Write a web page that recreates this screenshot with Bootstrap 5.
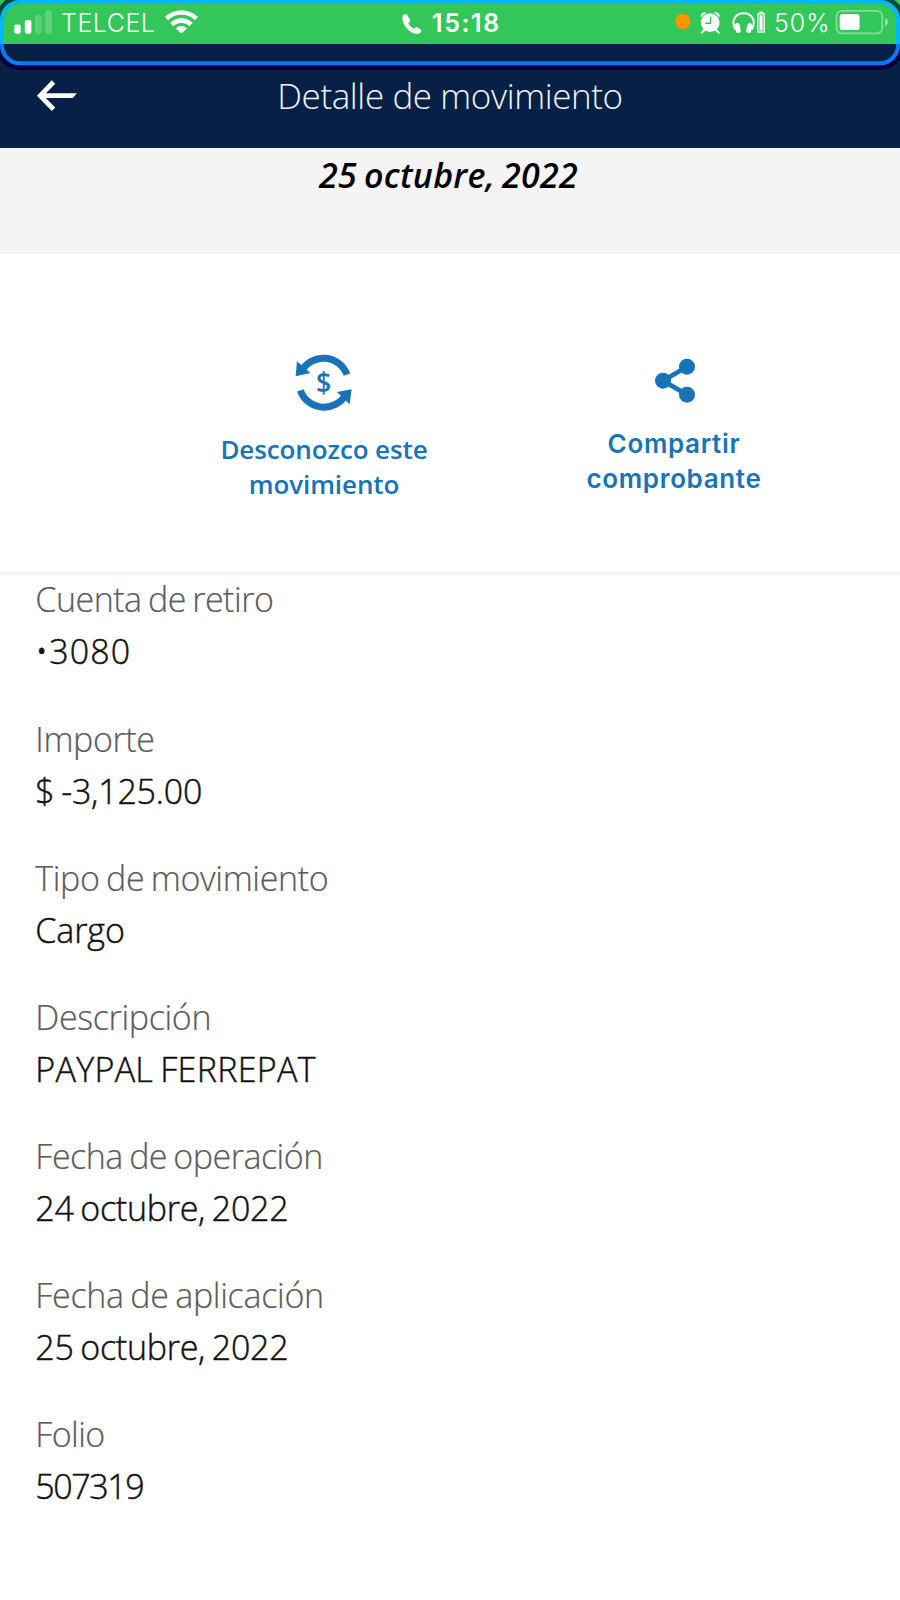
<!DOCTYPE html>
<html lang="es">
<head>
<meta charset="utf-8">
<meta name="viewport" content="width=device-width, initial-scale=1">
<title>Detalle de movimiento</title>
<link href="https://cdn.jsdelivr.net/npm/bootstrap@5.3.0/dist/css/bootstrap.min.css" rel="stylesheet">
<style>
  body { font-family: "Open Sans", sans-serif; color: #121212; width: 900px; height: 1600px; overflow: hidden; background: #fff; }
  svg { display: block; flex: none; }
  .status { height: 43.6px; background: #33c759; color: #fff; font-family: Inter, sans-serif; font-size: 25px; line-height: 40px; padding-top: 3px; }
  .status span { flex: none; white-space: nowrap; }
  .status svg { margin-top: -3px; }
  .carrier { width: 101px; margin-left: 1px; font-weight: 300; letter-spacing: .5px; }
  .call { margin-left: 198px; }
  .clock { width: 79px; margin-left: 8px; font-weight: 600; letter-spacing: 1.6px; }
  .indicators { margin-left: 159px; }
  .percent { width: 60px; margin-left: 4px; font-weight: 350; letter-spacing: 1px; }
  .ring { z-index: 5; pointer-events: none; }
  .topbar { height: 104.4px; background: #072146; color: #eaf6ff; }
  .topbar h1 { font-size: 35px; font-weight: 300; line-height: 103px; letter-spacing: -.4px; }
  .back { left: 36px; top: 35.4px; }
  .date-band { height: 106px; padding-right: 3px; background: #f4f4f4; color: #000; font-size: 34px; font-style: italic; font-weight: 600; line-height: 55px; letter-spacing: .25px; word-spacing: -2px; }
  .actions { height: 321px; padding-left: 149px; border-bottom: 3px solid #f4f4f4; color: #1973b8; font-size: 26px; font-weight: 600; line-height: 35px; }
  .action { width: 350px; color: inherit; }
  .dispute { padding-top: 97.7px; }
  .dispute svg { margin-bottom: 18.6px; }
  .dispute span { letter-spacing: -.1px; }
  .share { padding-top: 102.7px; font-family: Inter, sans-serif; }
  .share svg { margin: 0 0 22px 3px; }
  .share span { letter-spacing: .65px; }
  .details { padding: 1.5px 0 0 35.3px; font-size: 34px; word-spacing: -2px; }
  .details div { height: 139.1px; }
  .details dt { font-weight: 300; line-height: 46px; color: #5c5c5c; -webkit-text-stroke: .2px #5c5c5c; }
  .details dd { font-weight: 300; line-height: 58px; -webkit-text-stroke: .45px #121212; }
  .details div:nth-child(1) dt { letter-spacing: -.5px; }
  .details div:nth-child(1) dd { letter-spacing: 1.1px; }
  .details div:nth-child(2) dt { letter-spacing: -.4px; }
  .details div:nth-child(2) dd { letter-spacing: -.2px; }
  .details div:nth-child(3) dt { letter-spacing: -.35px; }
  .details div:nth-child(3) dd { letter-spacing: -.1px; }
  .details div:nth-child(4) dt { letter-spacing: -.35px; }
  .details div:nth-child(4) dd { letter-spacing: .3px; }
  .details div:nth-child(5) dt { letter-spacing: -.5px; }
  .details div:nth-child(5) dd, .details div:nth-child(6) dd { letter-spacing: -.25px; }
  .details div:nth-child(6) dt { letter-spacing: -.3px; }
  .details div:nth-child(7) dt { letter-spacing: -.6px; }
  .details div:nth-child(7) dd { letter-spacing: -1.4px; }
</style>
</head>
<body class="position-relative">
<div class="status d-flex align-items-start">
  <svg width="60" height="43" fill="#fff"><rect x="14.3" y="24.5" width="6.4" height="9.2" rx="2"/><rect x="24.8" y="20" width="6.6" height="13.7" rx="2"/><g opacity=".2"><rect x="35" y="15" width="6.4" height="18.7" rx="2"/><rect x="45.2" y="10" width="6.6" height="23.7" rx="2"/></g></svg>
  <span class="carrier">TELCEL</span>
  <svg width="40" height="43" viewBox="162 0 40 43" fill="none" stroke="#fff" stroke-width="4.6"><path d="M166.4 18.6a21.5 21.5 0 0 1 30 0M171.8 24.6a13.6 13.6 0 0 1 19.2 0"/><path d="M175.7 28.4a8 8 0 0 1 11.4 0l-5.7 5.2z" fill="#fff" stroke="none"/></svg>
  <svg class="call" width="24" height="43" viewBox="400 0 24 43" fill="#fff"><path d="M403.5 14.8c1.400-1.200 2.900-1 3.800.4l2.400 3.900c.8 1.400.3 2.400-.8 3.500-.6.6-.4 1.100.1 1.800 1.200 1.600 2.500 2.800 4.100 3.900.7.500 1.200.5 1.800-.1 1.100-1 2.200-1.200 3.500-.3l2.300 1.700c1.300 1 .7 2.700-.6 3.400-4 2.300-9 .2-13.200-4.500-4-4.500-6-10.700-3.400-13.700z"/></svg>
  <span class="clock">15:18</span>
  <svg class="indicators" width="100" height="43" viewBox="670 0 100 43" fill="#fff"><circle cx="682.800" cy="21.500" r="7.700" fill="#ff9500"/>
    <circle cx="710.200" cy="22.700" r="9.400"/><path d="M704.500 30l-2.800 2.800M716 30l2.800 2.800" stroke="#fff" stroke-width="2" stroke-linecap="round"/><path d="M701 17.300c-1.200-2.600 1.500-5.700 5.300-4.900zM719.400 17.300c1.200-2.600-1.500-5.700-5.300-4.900z"/><path d="M710.600 16.500v6.700h-5.300" fill="none" stroke="#33c759" stroke-width="1.400"/>
    <path d="M735.300 29.500c-5-9.500 1-16.300 8.300-16.300s13.300 6.800 8.300 16.300" fill="none" stroke="#fff" stroke-width="2"/><rect x="735.300" y="23" width="5" height="10" rx="2.300" transform="rotate(-12 738 28)"/><rect x="746.800" y="23" width="5" height="10" rx="2.300" transform="rotate(12 749 28)"/>
    <rect x="757.900" y="13.700" width="6.300" height="18.300" fill="none" stroke="#fff" stroke-width="1.300"/><path d="M759.500 15.300h3.100v15.100h-3.100zM759.300 11.500h3.500v2h-3.500z"/></svg>
  <span class="percent">50%</span>
  <svg width="58" height="43" viewBox="834 0 58 43"><rect x="836.500" y="10.800" width="45.800" height="22.600" rx="5.500" fill="none" stroke="#fff" stroke-opacity=".4" stroke-width="1.800"/><rect x="839.700" y="14" width="19.800" height="16" rx="2.600" fill="#fff"/><path d="M885.200 18v8c3.600-1.300 3.600-6.700 0-8z" fill="#fff" opacity=".5"/></svg>
</div>
<svg class="ring position-absolute top-0 start-0" width="900" height="72">
  <defs><linearGradient id="edge" gradientUnits="userSpaceOnUse" x1="0" y1="0" x2="0" y2="72"><stop offset=".605" stop-color="#00b7ff"/><stop offset=".605" stop-color="#0a78ff"/></linearGradient>
  <linearGradient id="shade" gradientUnits="userSpaceOnUse" x1="0" y1="0" x2="0" y2="72"><stop offset=".605" stop-color="#06493a"/><stop offset=".605" stop-color="#00003c"/></linearGradient></defs>
  <rect x="-2" y="-2" width="904" height="69.500" rx="22" fill="none" stroke="url(#shade)" stroke-width="5"/>
  <rect x="2" y="2" width="896" height="61.300" rx="18" fill="none" stroke="url(#edge)" stroke-width="4"/>
</svg>
<header class="topbar position-relative text-center">
  <svg class="back position-absolute" width="42" height="34" viewBox="36 79 42 34"><path d="M53.500 82L40.300 95.700l13.200 13.500M41 95.700h31.500" fill="none" stroke="#fff" stroke-width="4.800"/><path d="M71 93.300h5.800l-4 4.800H71z" fill="#fff"/></svg>
  <h1 class="m-0">Detalle de movimiento</h1>
</header>
<div class="date-band text-center">25 octubre, 2022</div>
<section class="actions d-flex align-items-start text-center">
  <a class="action dispute d-flex flex-column align-items-center text-decoration-none">
    <svg width="61.300" height="61.700" viewBox="280 35 184 185" fill="#1973b8"><path d="M442 103A75 75 0 0 0 306 92M302 150A75 75 0 0 0 438 163" fill="none" stroke="#1973b8" stroke-width="21"/><path d="M288 108l4-45 40 35zM456 147l-44 8 38 37z"/><text x="372" y="158" font-size="84" font-weight="600" text-anchor="middle" font-family="Open Sans" textLength="46" lengthAdjust="spacingAndGlyphs">$</text></svg>
    <span>Desconozco este<br>movimiento</span>
  </a>
  <a class="action share d-flex flex-column align-items-center text-decoration-none">
    <svg width="42.700" height="47.300" viewBox="285 50 128 142" fill="#1973b8"><path d="M384 79l-72 42 72 42" fill="none" stroke="#1973b8" stroke-width="14"/><circle cx="312" cy="121" r="24"/><circle cx="384" cy="79" r="24"/><circle cx="384" cy="163" r="24"/></svg>
    <span>Compartir<br>comprobante</span>
  </a>
</section>
<dl class="details m-0">
  <div><dt>Cuenta de retiro</dt><dd class="m-0">•3080</dd></div>
  <div><dt>Importe</dt><dd class="m-0">$ -3,125.00</dd></div>
  <div><dt>Tipo de movimiento</dt><dd class="m-0">Cargo</dd></div>
  <div><dt>Descripción</dt><dd class="m-0">PAYPAL FERREPAT</dd></div>
  <div><dt>Fecha de operación</dt><dd class="m-0">24 octubre, 2022</dd></div>
  <div><dt>Fecha de aplicación</dt><dd class="m-0">25 octubre, 2022</dd></div>
  <div><dt>Folio</dt><dd class="m-0">507319</dd></div>
</dl>
<script src="https://cdn.jsdelivr.net/npm/bootstrap@5.3.0/dist/js/bootstrap.bundle.min.js"></script>
</body>
</html>
